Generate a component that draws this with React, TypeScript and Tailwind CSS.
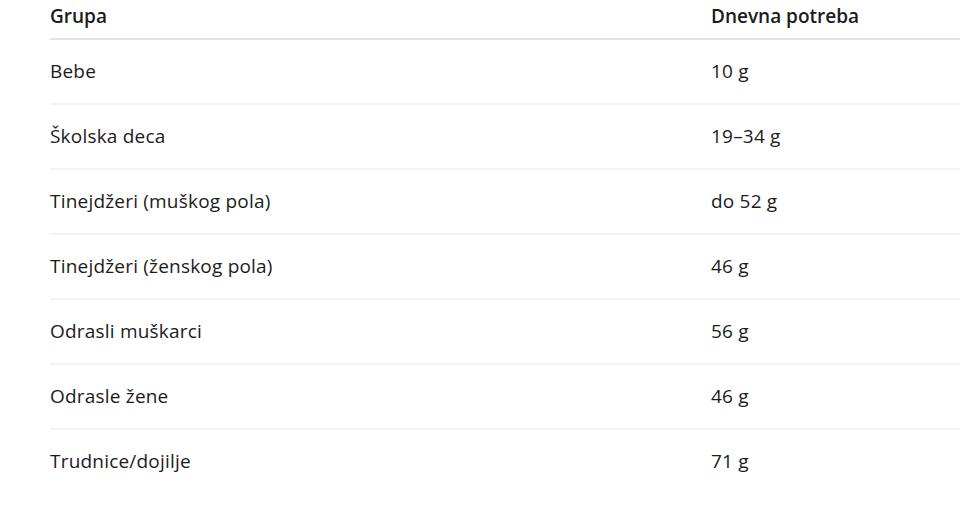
const rows: [string, string][] = [
  ['Bebe', '10 g'],
  ['Školska deca', '19–34 g'],
  ['Tinejdžeri (muškog pola)', 'do 52 g'],
  ['Tinejdžeri (ženskog pola)', '46 g'],
  ['Odrasli muškarci', '56 g'],
  ['Odrasle žene', '46 g'],
  ['Trudnice/dojilje', '71 g'],
];

export default function App() {
  return (
    <div className="w-[960px] h-[516px] bg-white overflow-hidden pl-[50px] text-[#1b1b1b] font-['Open_Sans',sans-serif]">
      <div className="flex h-[40px] items-start pt-[2px] border-b-2 border-[#e3e3e3] text-[19px] font-semibold">
        <div className="w-[661px]">Grupa</div>
        <div className="flex-1">Dnevna potreba</div>
      </div>
      {rows.map(([group, need], i) => (
        <div
          key={group}
          className={
            i < rows.length - 1
              ? 'flex h-[65px] items-center border-b-2 border-[#f3f3f3] text-[19px] tracking-[0.2px]'
              : 'flex h-[65px] items-center pb-[2px] text-[19px] tracking-[0.2px]'
          }
        >
          <div className="w-[661px]">{group}</div>
          <div className="flex-1">{need}</div>
        </div>
      ))}
    </div>
  );
}
